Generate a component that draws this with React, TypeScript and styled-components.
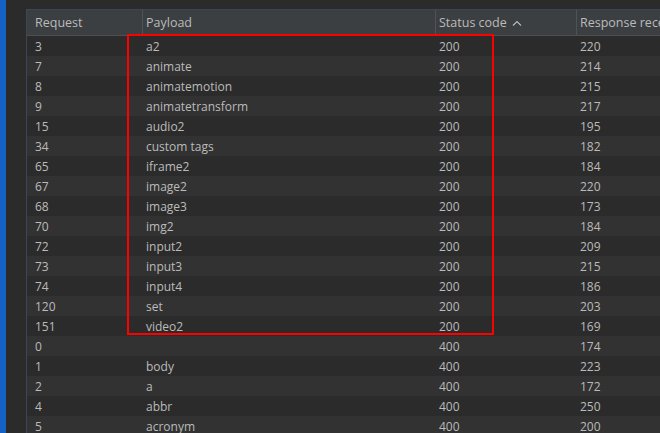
import { createGlobalStyle, styled } from 'styled-components';

const GlobalStyle = createGlobalStyle`
  html, body {
    margin: 0;
    padding: 0;
    background: #2b2b2b;
    overflow: hidden;
  }
  body {
    font-family: 'Open Sans', 'Noto Sans', sans-serif;
    font-size: 12px;
  }
`;

interface RowType {
  request: string;
  payload: string;
  status: string;
  length: string;
}

const rows: RowType[] = [
  { request: '3', payload: 'a2', status: '200', length: '220' },
  { request: '7', payload: 'animate', status: '200', length: '214' },
  { request: '8', payload: 'animatemotion', status: '200', length: '215' },
  { request: '9', payload: 'animatetransform', status: '200', length: '217' },
  { request: '15', payload: 'audio2', status: '200', length: '195' },
  { request: '34', payload: 'custom tags', status: '200', length: '182' },
  { request: '65', payload: 'iframe2', status: '200', length: '184' },
  { request: '67', payload: 'image2', status: '200', length: '220' },
  { request: '68', payload: 'image3', status: '200', length: '173' },
  { request: '70', payload: 'img2', status: '200', length: '184' },
  { request: '72', payload: 'input2', status: '200', length: '209' },
  { request: '73', payload: 'input3', status: '200', length: '215' },
  { request: '74', payload: 'input4', status: '200', length: '186' },
  { request: '120', payload: 'set', status: '200', length: '203' },
  { request: '151', payload: 'video2', status: '200', length: '169' },
  { request: '0', payload: '', status: '400', length: '174' },
  { request: '1', payload: 'body', status: '400', length: '223' },
  { request: '2', payload: 'a', status: '400', length: '172' },
  { request: '4', payload: 'abbr', status: '400', length: '250' },
  { request: '5', payload: 'acronym', status: '400', length: '200' },
];

const App = () => {
  return (
    <Page>
      <GlobalStyle />
      <BlueStrip />
      <Gutter />
      <Main>
        <Table>
          <HeaderRow>
            <HeadCell $first>Request</HeadCell>
            <HeadCell>Payload</HeadCell>
            <HeadCell>
              Status code
              <svg width="10" height="6" viewBox="0 0 10 6">
                <path d="M1 5.5 L5 1.5 L9 5.5" fill="none" stroke="#bbbbbb" strokeWidth="1.1" />
              </svg>
            </HeadCell>
            <HeadCell>Response received</HeadCell>
          </HeaderRow>
          {rows.map((row, i) => (
            <Row key={row.request} $alt={i % 2 === 1}>
              <Cell>{row.request}</Cell>
              <Cell>{row.payload}</Cell>
              <Cell>{row.status}</Cell>
              <Cell>{row.length}</Cell>
            </Row>
          ))}
          <Highlight />
        </Table>
      </Main>
    </Page>
  );
};

const Page = styled.div`
  display: flex;
  width: 660px;
  height: 433px;
  background: #2b2b2b;
  overflow: hidden;
`;

const BlueStrip = styled.div`
  width: 6px;
  flex-shrink: 0;
  background: #1662c4;
`;

const Gutter = styled.div`
  width: 20px;
  flex-shrink: 0;
  background: #2b2b2b;
`;

const Main = styled.div`
  flex: 1;
  padding-top: 9px;
  min-width: 0;
`;

const Table = styled.div`
  position: relative;
  border-top: 1px solid #3a4756;
  border-left: 1px solid #3a4756;
  color: #bbbbbb;
`;

const HeaderRow = styled.div`
  display: grid;
  grid-template-columns: 115px 293px 141px 1fr;
  height: 25px;
  background: #3c3f41;
  border-bottom: 1px solid #4d4f51;
`;

const HeadCell = styled.div<{ $first?: boolean }>`
  display: flex;
  align-items: center;
  gap: 5px;
  padding-left: ${(p) => (p.$first ? '8px' : '3px')};
  border-left: ${(p) => (p.$first ? 'none' : '1px solid #505254')};
  font-size: 12.5px;
  white-space: nowrap;
  overflow: hidden;
`;

const Row = styled.div<{ $alt: boolean }>`
  display: grid;
  grid-template-columns: 115px 293px 141px 1fr;
  height: 20px;
  background: ${(p) => (p.$alt ? '#323232' : '#2b2b2b')};
`;

const Cell = styled.div`
  display: flex;
  align-items: center;
  padding-left: 3px;
  border-left: 1px solid transparent;
  white-space: nowrap;
  overflow: hidden;
  &:first-child {
    padding-left: 8px;
    border-left: none;
  }
`;

const Highlight = styled.div`
  position: absolute;
  left: 100px;
  top: 24px;
  width: 363px;
  height: 297px;
  border: 2px solid #ff0000;
  pointer-events: none;
`;

export default App;
